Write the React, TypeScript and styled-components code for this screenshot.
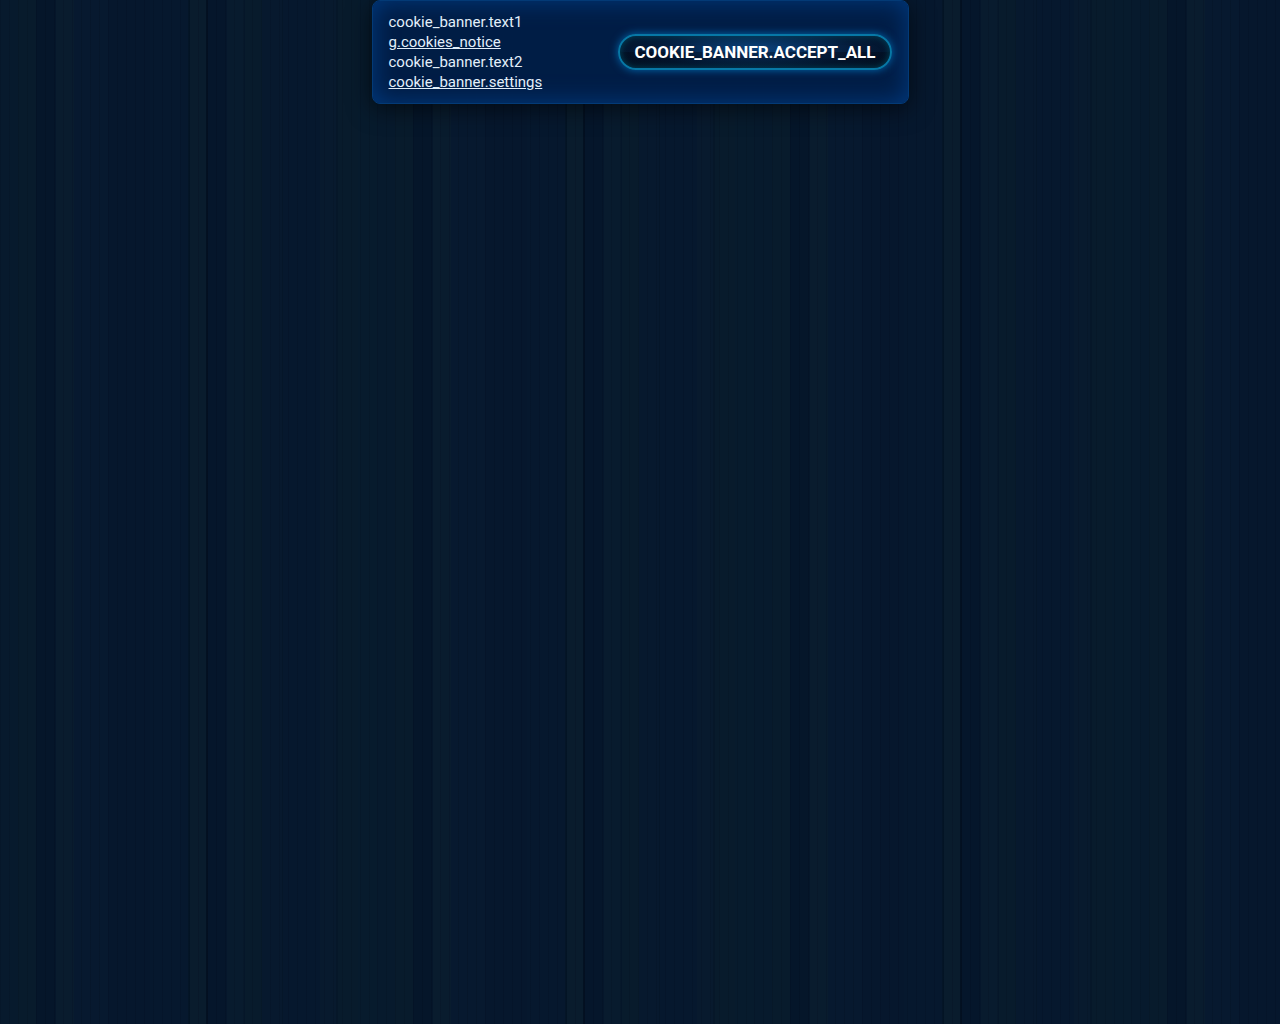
import React from 'react';
import styled, { createGlobalStyle } from 'styled-components';

const GlobalStyle = createGlobalStyle`
  * {
    box-sizing: border-box;
  }

  body {
    margin: 0;
    min-height: 100vh;
    color: #e3effa;
    font-family: Roboto, 'Liberation Sans', sans-serif;
    background-color: #06182c;
    background-image:
      repeating-linear-gradient(90deg, rgba(0, 8, 22, 0.16) 0 1px, transparent 1px 9px),
      linear-gradient(
        90deg,
        #071a2d 0 18px,
        #081b2c 18px 36px,
        #05162a 36px 56px,
        #091c2e 56px 74px,
        #07192f 74px 108px,
        #06172d 108px 150px,
        #06182e 150px 188px,
        #041527 188px 190px,
        #091c2d 190px 206px,
        #031122 206px 208px,
        #05162b 208px 227px,
        #081b2e 227px 244px,
        #051629 244px 245px,
        #081b2c 245px 262px,
        #07192e 262px 282px,
        #051629 282px 283px,
        #06182e 283px 320px,
        #081a2e 320px 336px,
        #061729 336px 338px,
        #081b2c 338px 358px,
        #071b2d 358px 377px
      );
    background-size: 377px 100%;
    background-repeat: repeat-x;
  }
`;

const Banner = styled.section`
  display: flex;
  align-items: center;
  justify-content: space-between;
  gap: 16px;
  width: 100%;
  max-width: 537px;
  margin: 0 auto;
  padding: 11px 16px;
  border: 1px solid #033a76;
  border-radius: 8px;
  background: #001d45;
  box-shadow:
    inset 0 0 24px #003a80,
    0 4px 24px rgba(0, 0, 0, 0.6);
`;

const Message = styled.div`
  display: flex;
  flex-direction: column;
  align-items: flex-start;
  font-size: 15px;
  line-height: 20px;
`;

const TextLink = styled.a`
  color: inherit;
  text-decoration: underline;
`;

const AcceptButton = styled.button`
  height: 36px;
  padding: 0 14px;
  border: 2px solid #0778a6;
  border-radius: 18px;
  color: #fff;
  font: bold 17px/20px Roboto, 'Liberation Sans', sans-serif;
  white-space: nowrap;
  cursor: pointer;
  background:
    linear-gradient(transparent 50%, rgba(0, 3, 12, 0.3) 50%),
    radial-gradient(ellipse 55% 90% at 50% 40%, #0b427c, #041a38 70%, #03142a);
  box-shadow:
    0 0 8px #0068b0,
    inset 0 0 7px #00485f;
`;

export default function App() {
  return (
    <>
      <GlobalStyle />
      <Banner aria-label="Cookies">
        <Message>
          <span>cookie_banner.text1</span>
          <TextLink href="#notice">g.cookies_notice</TextLink>
          <span>cookie_banner.text2</span>
          <TextLink href="#settings">cookie_banner.settings</TextLink>
        </Message>
        <AcceptButton type="button">COOKIE_BANNER.ACCEPT_ALL</AcceptButton>
      </Banner>
    </>
  );
}
